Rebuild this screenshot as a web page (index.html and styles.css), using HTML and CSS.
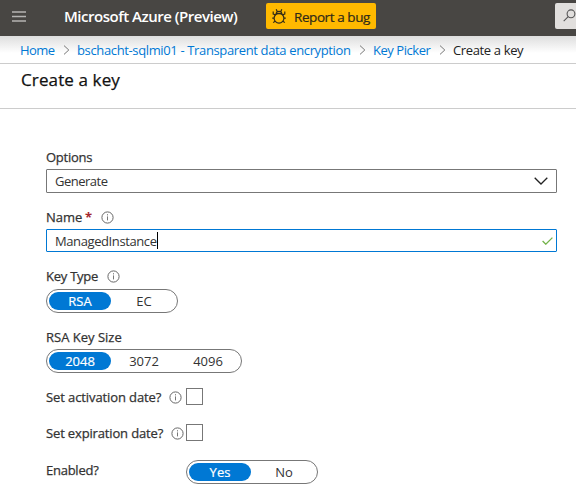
FILE: index.html
```html
<!DOCTYPE html>
<html lang="en">
<head>
<meta charset="utf-8">
<title>Create a key - Microsoft Azure</title>
<link rel="stylesheet" href="styles.css">
</head>
<body>
<svg class="defs" width="0" height="0" aria-hidden="true">
  <symbol id="info" viewBox="0 0 13 13"><circle cx="6.5" cy="6.5" r="5.6" fill="none" stroke="#666" stroke-width="1"/><path d="M6.5 5.4v4M6.5 3.2v1.2" stroke="#777" stroke-width="1"/></symbol>
  <symbol id="sep" viewBox="0 0 7 10"><path d="M1 .6l4.8 4.4L1 9.4" fill="none" stroke="#777" stroke-width="1"/></symbol>
</svg>
<header class="topbar">
  <svg class="menu" width="14" height="11" viewBox="0 0 14 11"><path d="M0 1h14M0 5.5h14M0 10h14" stroke="#b5b4b2" stroke-width="1.7"/></svg>
  <span class="brand">Microsoft Azure (Preview)</span>
  <button class="bug">
    <svg width="14" height="17" viewBox="0 0 14 17" fill="none" stroke="#302a18" stroke-width="1.2"><circle cx="7" cy="10.2" r="4.9"/><path d="M4 6.2C4.2 4.2 5.2 3.3 7 3.3s2.8.9 3 2.9M4.2 5.6h5.6M5.2 3.4L4.2 1.2M8.8 3.4L9.8 1.2M3.4 6.8L1.2 6V3.6M10.6 6.8l2.2-.8V3.6M2 10.2H.2M12 10.2h1.8M3 13.2l-1.8 1.4M11 13.2l1.8 1.4"/></svg>
    <span>Report a bug</span>
  </button>
  <div class="search"><svg width="13" height="13" viewBox="0 0 13 13" fill="none" stroke="#555" stroke-width="1.1"><circle cx="8" cy="4.8" r="3.9"/><path d="M5.2 7.6L.7 12.2"/></svg></div>
</header>
<nav class="crumbs">
  <a class="c-home">Home</a><svg width="7" height="10"><use href="#sep"/></svg>
  <a class="c-db">bschacht-sqlmi01 - Transparent data encryption</a><svg width="7" height="10"><use href="#sep"/></svg>
  <a class="c-picker">Key Picker</a><svg width="7" height="10"><use href="#sep"/></svg>
  <span class="c-key">Create a key</span>
</nav>
<div class="title"><h1>Create a key</h1></div>
<main class="form">
  <div class="label"><span class="t-options">Options</span></div>
  <div class="field select"><span class="t-generate">Generate</span><svg width="14" height="8" viewBox="0 0 14 8"><path d="M.7.8L7 7 13.3.8" fill="none" stroke="#222" stroke-width="1.3"/></svg></div>
  <div class="label name"><span class="t-name">Name</span><b>*</b><svg width="13" height="13"><use href="#info"/></svg></div>
  <div class="field input"><span class="t-value">ManagedInstance</span><i class="caret"></i><svg width="11" height="8" viewBox="0 0 11 8"><path d="M.6 4l3.2 3.2L10.4.6" fill="none" stroke="#74b34a" stroke-width="1.3"/></svg></div>
  <div class="label type"><span class="t-type">Key Type</span><svg width="13" height="13"><use href="#info"/></svg></div>
  <div class="pill"><span class="on">RSA</span><span>EC</span></div>
  <div class="label size"><span class="t-size">RSA Key Size</span></div>
  <div class="pill numbers"><span class="on">2048</span><span>3072</span><span>4096</span></div>
  <div class="row"><span class="t-act">Set activation date?</span><svg width="13" height="13"><use href="#info"/></svg><i class="box"></i></div>
  <div class="row"><span class="t-exp">Set expiration date?</span><svg width="13" height="13"><use href="#info"/></svg><i class="box"></i></div>
  <div class="row enabled"><span class="t-enabled">Enabled?</span><div class="pill"><span class="on">Yes</span><span>No</span></div></div>
</main>
</body>
</html>
```
FILE: styles.css
```css
* { box-sizing: border-box; }
body { margin: 0; width: 576px; height: 503px; overflow: hidden; background: #fff; color: #333; font: 13px/18px "Open Sans", "Noto Sans", sans-serif; }
span, a, h1 { white-space: nowrap; }
svg { flex: none; display: block; }
.defs { position: absolute; }
.topbar { height: 36px; background: #484643; display: flex; align-items: flex-start; }
.menu { margin: 11px 0 0 12px; }
.brand { width: 202px; margin: 6px 0 0 38px; color: #fff; font-size: 15px; font-weight: 600; line-height: 20px; letter-spacing: -.48px; }
.bug { width: 110px; height: 26px; margin: 3px 0 0; padding: 0 0 0 6px; border: 0; border-radius: 2px; background: #ffb900; color: #302a18; display: flex; align-items: center; gap: 8px; font: 13.5px/20px "Open Sans", sans-serif; letter-spacing: -.42px; -webkit-text-stroke: .2px; }
.bug span { margin-top: 1px; }
.search { width: 21px; height: 26px; margin: 3px 0 0 auto; padding: 6px 0 0 8px; background: #e1dfdd; border-radius: 2px 0 0 2px; }
.crumbs { height: 28px; padding: 1px 0 0 20px; display: flex; align-items: center; border-bottom: 1px solid #ccc; background: linear-gradient(#dedede, #fff 17px); }
.crumbs svg { margin-right: 7px; }
.crumbs a { color: #0078d4; }
.crumbs .c-home { width: 43px; letter-spacing: -.6px; }
.crumbs .c-db { width: 282px; letter-spacing: -.36px; }
.crumbs .c-picker { width: 66px; letter-spacing: -.45px; }
.c-key { color: #222; letter-spacing: -.36px; }
.title { height: 45px; padding: 4px 0 0 21px; border-bottom: 1px solid #ccc; }
h1 { margin: 0; color: #111; font-size: 17px; font-weight: 500; line-height: 24px; letter-spacing: .12px; -webkit-text-stroke: .25px; }
.form { padding: 39px 19px 0 46px; }
.label, .row > span { -webkit-text-stroke: .25px; }
.label { height: 18px; display: flex; align-items: center; }
.field { height: 24px; margin-top: 3px; padding: 0 8px; border: 1px solid #777; border-radius: 1px; display: flex; align-items: center; }
.field svg { margin-left: auto; }
.label b { color: #a4262c; margin-left: 4px; width: 16px; font-size: 13px; -webkit-text-stroke: 0; }
.name { margin-top: 15px; }
.input { height: 23px; border-color: #0078d4; padding-right: 3px; }
.caret { width: 1px; height: 17px; background: #000; }
.t-options, .t-enabled { letter-spacing: -.25px; }
.t-generate { letter-spacing: -.5px; }
.t-value { letter-spacing: -.4px; }
.t-name { width: 35px; }
.t-type { width: 61px; letter-spacing: -.25px; }
.type { margin-top: 15px; }
.pill { width: max-content; height: 24px; margin-top: 4px; padding: 2px; border: 1px solid #777; border-radius: 12px; display: flex; align-items: center; }
.pill span { width: 62px; height: 18px; border-radius: 9px; text-align: center; line-height: 18px; }
.pill span + span { margin-left: 2px; }
.pill .on { background: #0078d4; color: #fff; -webkit-text-stroke: .2px; }
.size { margin-top: 15px; }
.numbers { margin-top: 3px; }
.row { width: 157px; height: 18px; margin-top: 15px; display: flex; align-items: center; }
.row + .row { margin-top: 18px; }
.row .t-act { width: 123px; letter-spacing: -.1px; }
.row .t-exp { width: 125px; letter-spacing: -.15px; }
.box { width: 17px; height: 17px; border: 1px solid #777; margin: 0 0 2px auto; }
.row.enabled { width: 272px; height: 24px; margin-top: 17px; align-items: flex-start; justify-content: space-between; }
.enabled .t-enabled { line-height: 22px; }
.enabled .pill { margin: 1px 0 0; }
```
